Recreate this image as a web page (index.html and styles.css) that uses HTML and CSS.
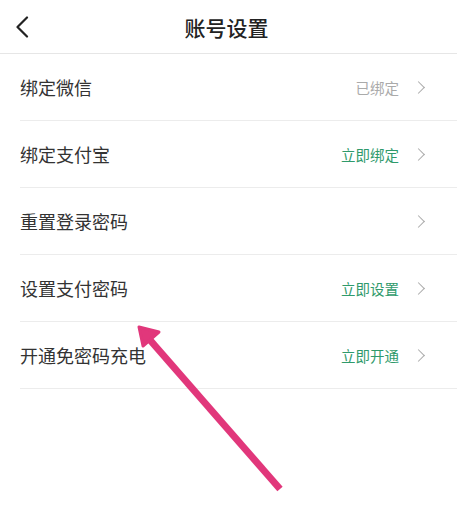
FILE: index.html
```html
<!DOCTYPE html>
<html lang="zh">
<head>
<meta charset="utf-8">
<title>账号设置</title>
<link rel="stylesheet" href="styles.css">
</head>
<body>
<div class="page">
  <header class="topbar">
    <span class="back">
      <svg width="14" height="22" viewBox="0 0 14 22"><path d="M12 1.5 L2.5 11 L12 20.5" fill="none" stroke="#222" stroke-width="2.2" stroke-linecap="round" stroke-linejoin="round"/></svg>
    </span>
    <h1 class="title">账号设置</h1>
  </header>
  <ul class="list">
    <li class="row"><span class="label">绑定微信</span><span class="side"><span class="status muted">已绑定</span><span class="chev"></span></span></li>
    <li class="row"><span class="label">绑定支付宝</span><span class="side"><span class="status green">立即绑定</span><span class="chev"></span></span></li>
    <li class="row"><span class="label">重置登录密码</span><span class="side"><span class="chev"></span></span></li>
    <li class="row"><span class="label">设置支付密码</span><span class="side"><span class="status green">立即设置</span><span class="chev"></span></span></li>
    <li class="row"><span class="label">开通免密码充电</span><span class="side"><span class="status green">立即开通</span><span class="chev"></span></span></li>
  </ul>
  <svg class="arrow" width="457" height="505" viewBox="0 0 457 505">
    <line x1="280" y1="489" x2="150" y2="340" stroke="#e1377b" stroke-width="7"/>
    <polygon points="139,327 159,332 143,346" fill="#e1377b" stroke="#e1377b" stroke-width="3" stroke-linejoin="round"/>
  </svg>
</div>
</body>
</html>
```
FILE: styles.css
```css
* { box-sizing: border-box; }
html, body { margin: 0; padding: 0; background: #fff; }
body { font-family: "Noto Sans CJK SC", "Noto Sans", sans-serif; color: #333; }
.page { position: relative; width: 457px; height: 505px; overflow: hidden; }
.topbar {
  height: 54px;
  border-bottom: 1px solid #e6e6e6;
  display: flex;
  align-items: center;
  justify-content: center;
  position: relative;
}
.back { position: absolute; left: 15px; top: 16px; display: flex; }
.title { margin: 0 4px 0 0; font-size: 21px; font-weight: 500; color: #222; letter-spacing: 0; }
.list { list-style: none; margin: 0; padding: 0 0 0 20px; }
.row {
  height: 67px;
  border-bottom: 1px solid #ececec;
  display: flex;
  align-items: center;
  justify-content: space-between;
  padding-right: 34px;
}
.label { font-size: 18px; color: #333; }
.side { display: flex; align-items: center; }
.status { font-size: 14.5px; margin-right: 15px; }
.muted { color: #aaa; }
.green { color: #2f9a6b; }
.chev {
  width: 9px; height: 9px;
  border-top: 1.5px solid #aaa;
  border-right: 1.5px solid #aaa;
  transform: rotate(45deg);
}
.arrow { position: absolute; left: 0; top: 0; pointer-events: none; }
```
